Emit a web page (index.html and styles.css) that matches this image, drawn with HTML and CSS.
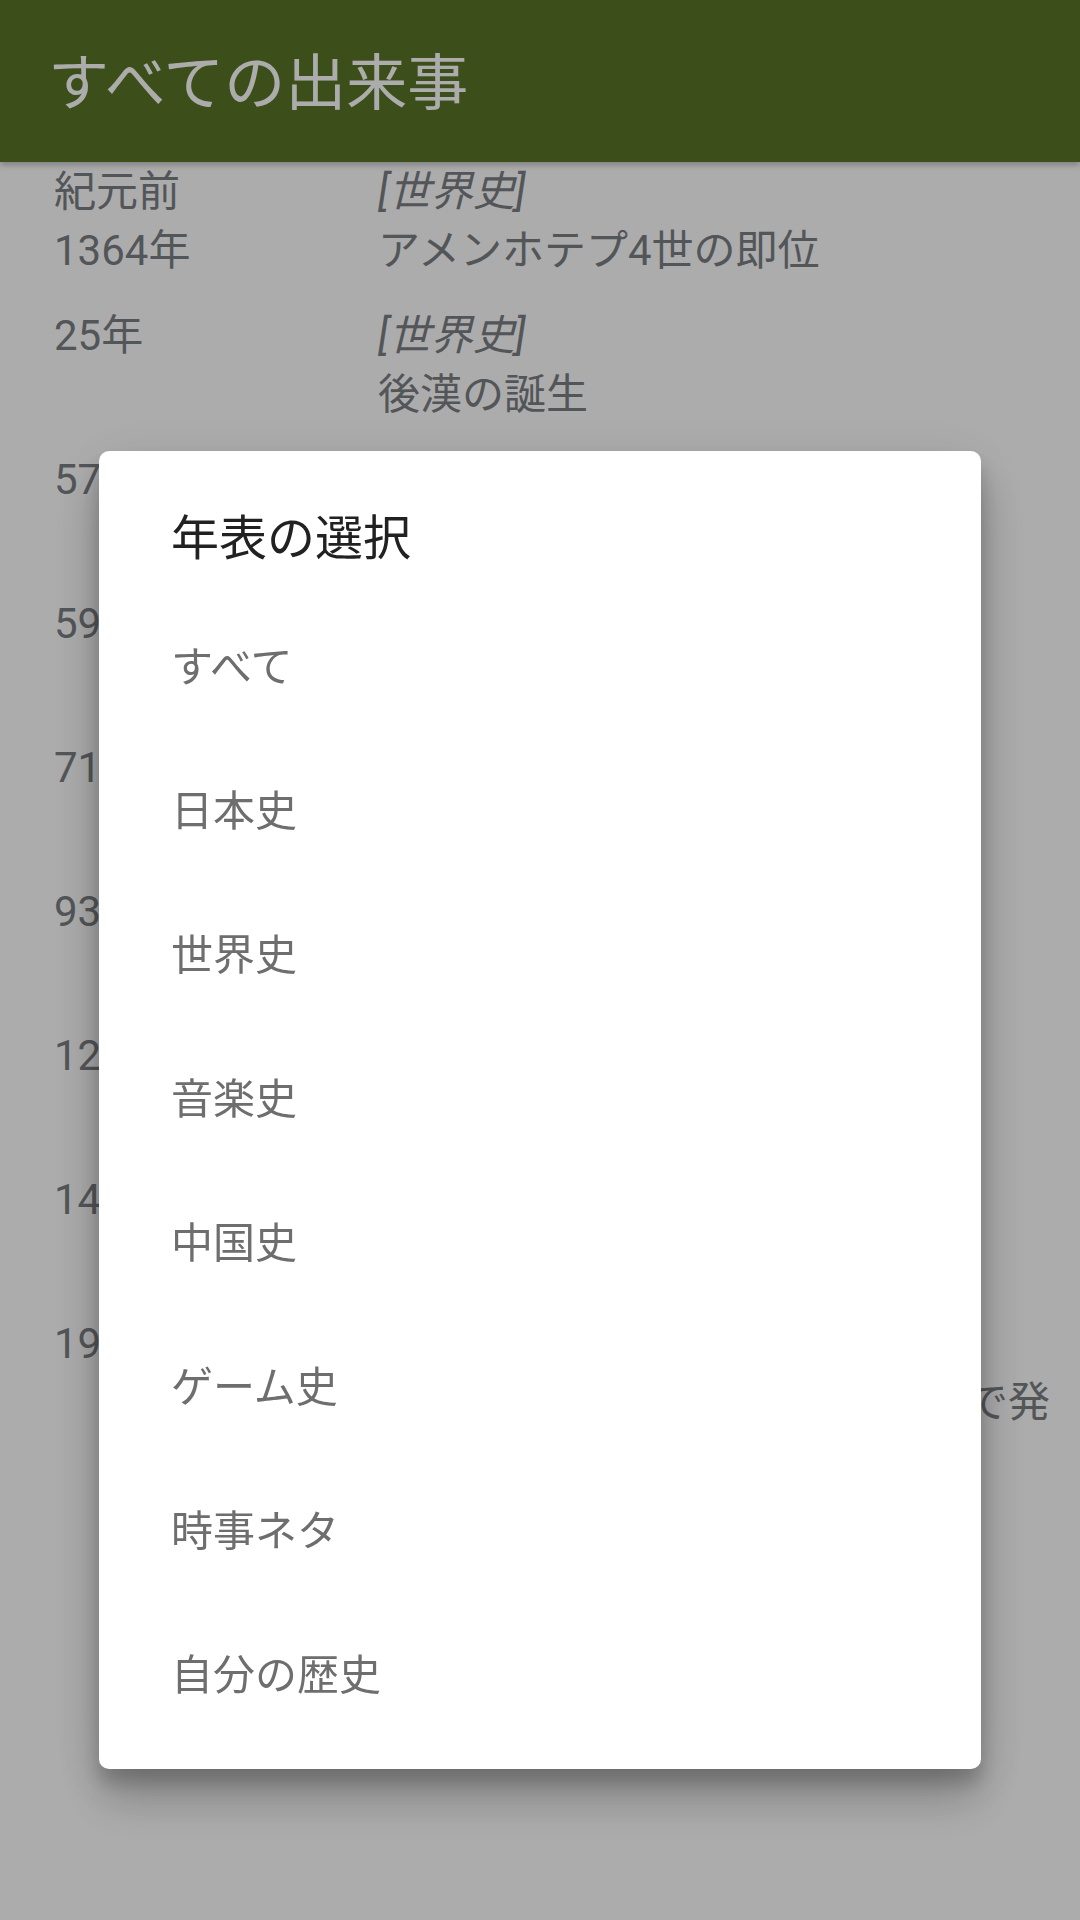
FILE: index.html
```html
<!DOCTYPE html>
<html lang="ja">
	<head>
		<meta charset="UTF-8" />
		<meta name="viewport" content="width=device-width, initial-scale=1.0" />
		<title>すべての出来事</title>
		<link rel="stylesheet" href="styles.css">
	</head>
	<body>
		<div class="app">
			<header class="toolbar">
				<h1 class="toolbar-title">すべての出来事</h1>
			</header>

			<ul class="events">
				<li class="event">
					<div class="event-year">紀元前<br>1364年</div>
					<div class="event-body">
						<div class="event-cat">[世界史]</div>
						<div class="event-text">アメンホテプ4世の即位</div>
					</div>
				</li>
				<li class="event">
					<div class="event-year">25年</div>
					<div class="event-body">
						<div class="event-cat">[世界史]</div>
						<div class="event-text">後漢の誕生</div>
					</div>
				</li>
				<li class="event">
					<div class="event-year">57年</div>
					<div class="event-body">
						<div class="event-cat">[日本史]</div>
						<div class="event-text">倭の奴国王が後漢に朝貢</div>
					</div>
				</li>
				<li class="event">
					<div class="event-year">593年</div>
					<div class="event-body">
						<div class="event-cat">[日本史]</div>
						<div class="event-text">聖徳太子が摂政となる</div>
					</div>
				</li>
				<li class="event">
					<div class="event-year">710年</div>
					<div class="event-body">
						<div class="event-cat">[日本史]</div>
						<div class="event-text">平城京に遷都</div>
					</div>
				</li>
				<li class="event">
					<div class="event-year">935年</div>
					<div class="event-body">
						<div class="event-cat">[日本史]</div>
						<div class="event-text">平将門の乱</div>
					</div>
				</li>
				<li class="event">
					<div class="event-year">1274年</div>
					<div class="event-body">
						<div class="event-cat">[日本史]</div>
						<div class="event-text">文永の役</div>
					</div>
				</li>
				<li class="event">
					<div class="event-year">1467年</div>
					<div class="event-body">
						<div class="event-cat">[日本史]</div>
						<div class="event-text">応仁の乱</div>
					</div>
				</li>
				<li class="event">
					<div class="event-year">1983年</div>
					<div class="event-body">
						<div class="event-cat">[ゲーム史]</div>
						<div class="event-text">ファミリーコンピュータが日本で発売</div>
					</div>
				</li>
			</ul>
		</div>

		<div class="scrim"></div>

		<div class="dialog">
			<h2 class="dialog-title">年表の選択</h2>
			<ul class="dialog-list">
				<li class="dialog-item">すべて</li>
				<li class="dialog-item">日本史</li>
				<li class="dialog-item">世界史</li>
				<li class="dialog-item">音楽史</li>
				<li class="dialog-item">中国史</li>
				<li class="dialog-item">ゲーム史</li>
				<li class="dialog-item">時事ネタ</li>
				<li class="dialog-item">自分の歴史</li>
			</ul>
		</div>
	</body>
</html>
```

FILE: styles.css
```css
* {
	box-sizing: border-box;
}
body {
	margin: 0;
	width: 1080px;
	height: 1920px;
	overflow: hidden;
	background: #fff;
	font-family: Roboto, "Noto Sans CJK JP", sans-serif;
}
.app {
	height: 100%;
}
.toolbar {
	height: 162px;
	background: #5a7425;
	display: flex;
	align-items: center;
	padding: 0 0 6px 48px;
	box-shadow: 0 3px 6px rgba(0, 0, 0, 0.25);
	position: relative;
	z-index: 1;
}
.toolbar-title {
	margin: 0;
	font-size: 61px;
	font-weight: 400;
	color: #fff;
}
.events {
	list-style: none;
	margin: 0;
	padding: 0;
}
.event {
	display: flex;
	padding: 0 28px 26px 54px;
	font-size: 42px;
	line-height: 59px;
	color: #7c8084;
}
.event-year {
	width: 324px;
	flex-shrink: 0;
}
.event-body {
	flex: 1;
}
.event-cat {
	font-style: italic;
}
.scrim {
	position: fixed;
	inset: 0;
	background: rgba(0, 0, 0, 0.325);
	z-index: 2;
}
.dialog {
	position: fixed;
	top: 451px;
	left: 99px;
	width: 882px;
	height: 1318px;
	background: #fff;
	border-radius: 10px;
	padding: 56px 0 0 72px;
	z-index: 3;
	box-shadow: 0 32px 46px rgba(0, 0, 0, 0.18), 0 12px 56px rgba(0, 0, 0, 0.12), 0 14px 18px rgba(0, 0, 0, 0.18);
}
.dialog-title {
	margin: 0 0 20px;
	font-size: 48px;
	line-height: 64px;
	font-weight: 400;
	color: #212121;
}
.dialog-list {
	list-style: none;
	margin: 0;
	padding: 0;
}
.dialog-item {
	height: 144px;
	display: flex;
	align-items: center;
	font-size: 42px;
	color: #6e6e6e;
}
```
